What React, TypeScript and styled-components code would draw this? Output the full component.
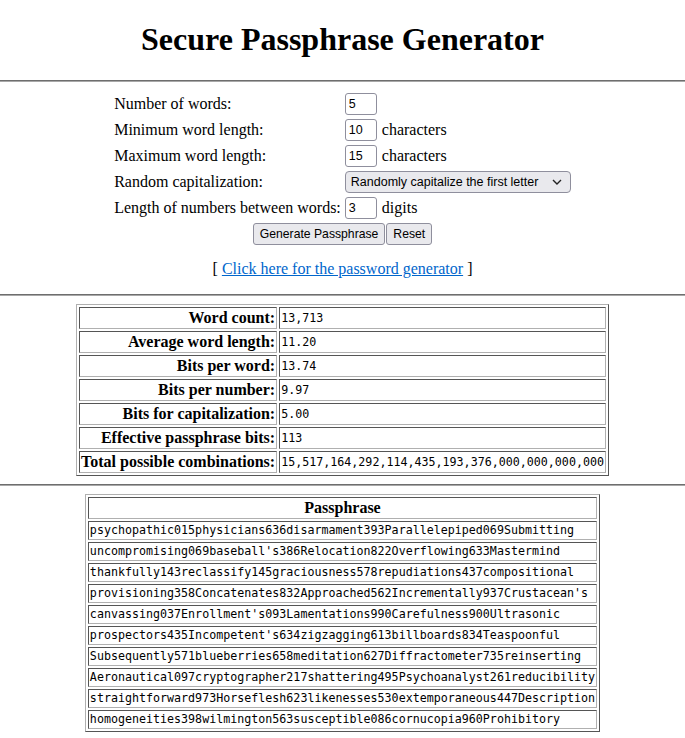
import React from 'react'
import styled, { createGlobalStyle } from 'styled-components'

const GlobalStyle = createGlobalStyle`
  body {
    margin: 0;
    background: #fff;
    color: #000;
    font-family: "Liberation Serif", "Times New Roman", serif;
    font-size: 16px;
  }
`

const stats = [
  ['Word count:', '13,713'],
  ['Average word length:', '11.20'],
  ['Bits per word:', '13.74'],
  ['Bits per number:', '9.97'],
  ['Bits for capitalization:', '5.00'],
  ['Effective passphrase bits:', '113'],
  ['Total possible combinations:', '15,517,164,292,114,435,193,376,000,000,000,000'],
]

const phrases = [
  'psychopathic015physicians636disarmament393Parallelepiped069Submitting',
  "uncompromising069baseball's386Relocation822Overflowing633Mastermind",
  'thankfully143reclassify145graciousness578repudiations437compositional',
  "provisioning358Concatenates832Approached562Incrementally937Crustacean's",
  "canvassing037Enrollment's093Lamentations990Carefulness900Ultrasonic",
  "prospectors435Incompetent's634zigzagging613billboards834Teaspoonful",
  'Subsequently571blueberries658meditation627Diffractometer735reinserting',
  'Aeronautical097cryptographer217shattering495Psychoanalyst261reducibility',
  'straightforward973Horseflesh623likenesses530extemporaneous447Description',
  'homogeneities398wilmington563susceptible086cornucopia960Prohibitory',
]

export default function App() {
  return (
    <>
      <GlobalStyle />
      <Title>Secure Passphrase Generator</Title>
      <Rule $top={22} />

      <FormTable>
        <tbody>
          <tr>
            <LabelCell>Number of words:</LabelCell>
            <td>
              <Field>
                <NumberInput defaultValue="5" />
              </Field>
            </td>
          </tr>
          <tr>
            <LabelCell>Minimum word length:</LabelCell>
            <td>
              <Field>
                <NumberInput defaultValue="10" />
                characters
              </Field>
            </td>
          </tr>
          <tr>
            <LabelCell>Maximum word length:</LabelCell>
            <td>
              <Field>
                <NumberInput defaultValue="15" />
                characters
              </Field>
            </td>
          </tr>
          <tr>
            <LabelCell>Random capitalization:</LabelCell>
            <td>
              <Field>
                <SelectWrap>
                  <Select defaultValue="first">
                    <option value="none">No capitalization</option>
                    <option value="first">Randomly capitalize the first letter</option>
                    <option value="any">Randomly capitalize any letter</option>
                  </Select>
                  <Chevron width="10" height="6" viewBox="0 0 10 6">
                    <path d="M1 1l4 4 4-4" fill="none" stroke="#222" strokeWidth="1.4" />
                  </Chevron>
                </SelectWrap>
              </Field>
            </td>
          </tr>
          <tr>
            <LabelCell>Length of numbers between words:</LabelCell>
            <td>
              <Field>
                <NumberInput defaultValue="3" />
                digits
              </Field>
            </td>
          </tr>
          <tr>
            <td colSpan={2}>
              <Buttons>
                <Button>Generate Passphrase</Button>
                <Button>Reset</Button>
              </Buttons>
            </td>
          </tr>
        </tbody>
      </FormTable>

      <LinkLine>
        [ <Link href="#">Click here for the password generator</Link> ]
      </LinkLine>

      <Rule $top={16} />

      <DataTable>
        <tbody>
          {stats.map(([label, value]) => (
            <tr key={label}>
              <StatLabel>{label}</StatLabel>
              <StatValue>{value}</StatValue>
            </tr>
          ))}
        </tbody>
      </DataTable>

      <Rule $top={8} />

      <DataTable>
        <thead>
          <tr>
            <PhraseHead>Passphrase</PhraseHead>
          </tr>
        </thead>
        <tbody>
          {phrases.map(p => (
            <tr key={p}>
              <PhraseCell>{p}</PhraseCell>
            </tr>
          ))}
        </tbody>
      </DataTable>
    </>
  )
}

const Title = styled.h1`
  margin: 21px 0 0;
  font-size: 32px;
  line-height: 37px;
  font-weight: bold;
  text-align: center;
`

const Rule = styled.hr<{ $top: number }>`
  margin: ${p => p.$top}px 0 0;
  height: 0;
  border: 0;
  border-top: 1px solid #6e6e6e;
  border-bottom: 1px solid #a8a8a8;
`

const FormTable = styled.table`
  margin: 8px auto 0;
  border-spacing: 2px;

  td {
    padding: 1px;
    vertical-align: middle;
  }
`

const LabelCell = styled.td`
  line-height: 18px;
  white-space: nowrap;
`

const Field = styled.div`
  display: flex;
  align-items: center;
  gap: 5px;
  height: 22px;
  line-height: 18px;
  white-space: nowrap;
`

const NumberInput = styled.input`
  box-sizing: border-box;
  width: 32px;
  height: 22px;
  padding: 1px 3px;
  border: 1px solid #8f8f9d;
  border-radius: 3px;
  background: #fff;
  font-family: "Liberation Sans", Arial, sans-serif;
  font-size: 12.5px;
  color: #000;
`

const SelectWrap = styled.span`
  position: relative;
  display: inline-block;
`

const Select = styled.select`
  box-sizing: border-box;
  width: 226px;
  height: 22px;
  padding: 0 20px 0 5px;
  border: 1px solid #8f8f9d;
  border-radius: 4px;
  background: #e9e9ed;
  font-family: "Liberation Sans", Arial, sans-serif;
  font-size: 12.5px;
  color: #000;
  appearance: none;
`

const Chevron = styled.svg`
  position: absolute;
  right: 9px;
  top: 8px;
  pointer-events: none;
`

const Buttons = styled.div`
  display: flex;
  justify-content: center;
  gap: 1px;
`

const Button = styled.button`
  box-sizing: border-box;
  height: 22px;
  padding: 0 6px;
  border: 1px solid #8f8f9d;
  border-radius: 3px;
  background: #e9e9ed;
  font-family: "Liberation Sans", Arial, sans-serif;
  font-size: 12.2px;
  color: #000;
`

const LinkLine = styled.div`
  margin-top: 12px;
  line-height: 18px;
  text-align: center;
`

const Link = styled.a`
  color: #0066cc;
  text-decoration: underline;
`

const DataTable = styled.table`
  margin: 8px auto 0;
  border-spacing: 2px;
  border: 1px solid;
  border-color: #b0b0b0 #555 #555 #b0b0b0;

  td,
  th {
    padding: 1px;
    border: 1px solid;
    border-color: #555 #b0b0b0 #b0b0b0 #555;
    white-space: nowrap;
  }
`

const StatLabel = styled.th`
  text-align: right;
  font-weight: bold;
  line-height: 18px;
`

const StatValue = styled.td`
  text-align: left;
  font-family: "DejaVu Sans Mono", "Liberation Mono", monospace;
  font-size: 11.66px;
  line-height: 18px;
`

const PhraseHead = styled.th`
  text-align: center;
  font-weight: bold;
  line-height: 18px;
`

const PhraseCell = styled.td`
  text-align: left;
  font-family: "DejaVu Sans Mono", "Liberation Mono", monospace;
  font-size: 11.66px;
  line-height: 15px;
`
